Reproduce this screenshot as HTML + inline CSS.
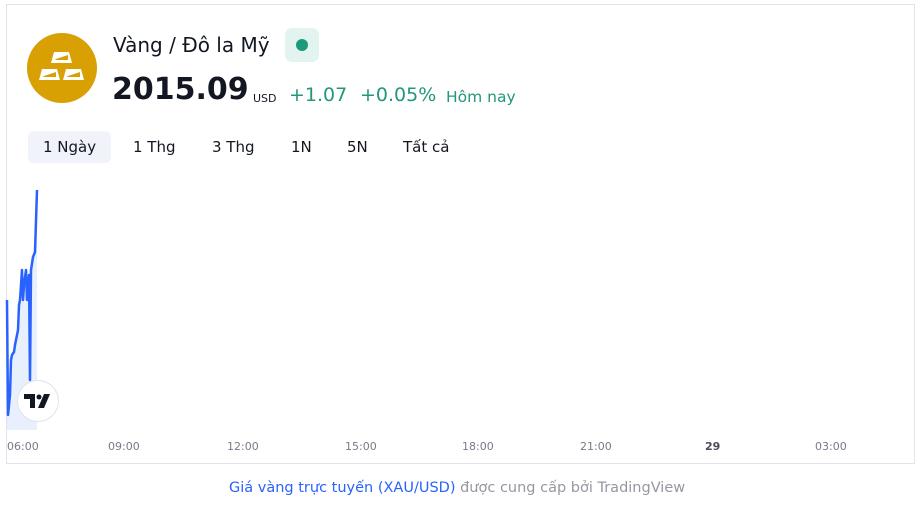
<html><head><style>
body{margin:0;background:#fff;font-family:"DejaVu Sans","Liberation Sans",sans-serif;width:920px;height:505px;overflow:hidden;position:relative}
.box{position:absolute;left:6px;top:4px;width:907px;height:458px;border:1px solid #e0e3eb}
.t{position:absolute;white-space:nowrap}
.tab{position:absolute;top:131px;height:32px;line-height:32px;font-size:15px;color:#131722;padding:0 15px}
.ax{position:absolute;top:440px;font-size:11px;color:#787b86}
</style></head><body>
<div class="box"></div>
<div style="position:absolute;left:27px;top:33px;width:70px;height:70px;border-radius:50%;background:#d9a004"></div>
<svg style="position:absolute;left:27px;top:33px" width="70" height="70" viewBox="0 0 70 70" fill="#fff">
<path d="M27 19h15l3 11H24z"/><path d="M15 36h15l3 11H12z"/><path d="M39 36h15l3 11H36z"/>
<path d="M29 26l12-4v5H28z" fill="#d9a004"/><path d="M17 43l12-4v5H16z" fill="#d9a004"/><path d="M41 43l12-4v5H40z" fill="#d9a004"/></svg>
<div class="t" style="left:113px;top:33px;font-size:20px;color:#131722">Vàng / Đô la Mỹ</div>
<div style="position:absolute;left:285px;top:28px;width:34px;height:34px;border-radius:7px;background:#e3f3ef"></div>
<div style="position:absolute;left:296px;top:39px;width:12px;height:12px;border-radius:50%;background:#1b9a7c"></div>
<div class="t" style="left:112px;top:72px;font-size:30px;font-weight:bold;color:#131722">2015.09</div>
<div class="t" style="left:253px;top:92px;font-size:11px;color:#131722">USD</div>
<div class="t" style="left:289px;top:84px;font-size:19px;color:#22977a">+1.07</div>
<div class="t" style="left:360px;top:84px;font-size:19px;color:#22977a">+0.05%</div>
<div class="t" style="left:446px;top:88px;font-size:15.5px;color:#22977a">Hôm nay</div>
<div class="tab" style="left:28px;background:#f0f3fa;border-radius:6px;">1 Ngày</div>
<div class="tab" style="left:118px">1 Thg</div>
<div class="tab" style="left:197px">3 Thg</div>
<div class="tab" style="left:276px">1N</div>
<div class="tab" style="left:332px">5N</div>
<div class="tab" style="left:388px">Tất cả</div>
<svg style="position:absolute;left:0;top:0" width="920" height="505">
<path d="M7 300L8 415L10 395L11 360L12 355L14 352L15 345L16 340L18 330L19 305L20 300L22 270L23 300L24 285L26 270L27 300L29 275L30 380L31 270L33 257L35 252L37 190L37 430L7 430Z" fill="#e9f0fd"/>
<path d="M7 300L8 415L10 395L11 360L12 355L14 352L15 345L16 340L18 330L19 305L20 300L22 270L23 300L24 285L26 270L27 300L29 275L30 380L31 270L33 257L35 252L37 190" fill="none" stroke="#2962ff" stroke-width="2.5" stroke-linejoin="round"/>
</svg>
<div style="position:absolute;left:17px;top:380px;width:40px;height:40px;border-radius:50%;background:#fff;border:1px solid #e0e3eb"></div>
<svg style="position:absolute;left:24px;top:394px" width="28" height="14" viewBox="0 0 28 14" fill="#131722"><path d="M0 0h11v14H6V5H0z"/><circle cx="15" cy="3" r="2.5"/><path d="M20 0h6l-6 14h-6z"/></svg>
<div class="ax" style="left:7px">06:00</div>
<div class="ax" style="left:108px">09:00</div>
<div class="ax" style="left:227px">12:00</div>
<div class="ax" style="left:345px">15:00</div>
<div class="ax" style="left:462px">18:00</div>
<div class="ax" style="left:580px">21:00</div>
<div class="ax" style="left:705px;font-weight:bold;color:#4a4d57">29</div>
<div class="ax" style="left:815px">03:00</div>
<div class="t" style="left:229px;top:480px;font-size:14.5px;color:#2962ff">Giá vàng trực tuyến (XAU/USD) <span style="color:#9598a1">được cung cấp bởi TradingView</span></div>
</body></html>
